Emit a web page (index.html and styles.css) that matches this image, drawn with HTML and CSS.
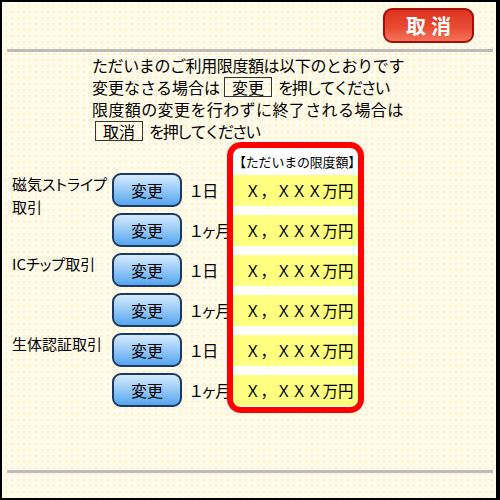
FILE: index.html
```html
<!DOCTYPE html>
<html lang="ja">
<head>
<meta charset="utf-8">
<title>限度額変更</title>
<link rel="stylesheet" href="styles.css">
</head>
<body>
<div class="frame">
  <header class="topbar">
    <button class="cancel">取消</button>
  </header>
  <div class="rule"></div>
  <div class="intro">
    <p class="tight">ただいまのご利用限度額は以下のとおりです</p>
    <p>変更なさる場合は<span class="key">変更</span><span class="kana">を押してください</span></p>
    <p class="loose">限度額の変更を行わずに終了される場合は</p>
    <p><span class="key key-first">取消</span><span class="kana">を押してください</span></p>
  </div>
  <div class="table">
    <div class="left">
      <div class="label">磁気ストライプ<br>取引</div>
      <button class="btn">変更</button><span class="period">１日</span>
      <button class="btn">変更</button><span class="period">１ヶ月</span>
      <div class="label">ICチップ取引</div>
      <button class="btn">変更</button><span class="period">１日</span>
      <button class="btn">変更</button><span class="period">１ヶ月</span>
      <div class="label">生体認証取引</div>
      <button class="btn">変更</button><span class="period">１日</span>
      <button class="btn">変更</button><span class="period">１ヶ月</span>
    </div>
    <div class="limits">
      <div class="limits-head">【ただいまの限度額】</div>
      <div class="amount">Ｘ，ＸＸＸ万円</div>
      <div class="amount">Ｘ，ＸＸＸ万円</div>
      <div class="amount">Ｘ，ＸＸＸ万円</div>
      <div class="amount">Ｘ，ＸＸＸ万円</div>
      <div class="amount">Ｘ，ＸＸＸ万円</div>
      <div class="amount">Ｘ，ＸＸＸ万円</div>
    </div>
  </div>
  <div class="rule rule-bottom"></div>
</div>
</body>
</html>
```

FILE: styles.css
```css
* { box-sizing: border-box; }
html, body { margin: 0; padding: 0; }
body {
  font-family: "Noto Sans CJK JP", "Noto Sans", sans-serif;
  color: #000;
}
.frame {
  width: 500px;
  height: 500px;
  border-style: solid;
  border-color: #000;
  border-width: 2px 4px 2px 2px;
  background-color: #fffcee;
  background-image: radial-gradient(circle, #fff2c4 1.1px, rgba(255,255,255,0) 1.8px);
  background-size: 6px 6px;
  background-position: 1px 1px;
  overflow: hidden;
}
.topbar {
  height: 47px;
  display: flex;
  justify-content: flex-end;
  align-items: flex-start;
  padding: 6px 22px 0 0;
}
.cancel {
  width: 91px;
  height: 35px;
  border: 2px solid #a50f0a;
  border-radius: 9px;
  background: linear-gradient(#dc3422, #e94a33 55%, #f3735a);
  color: #fff;
  font-family: "Noto Sans CJK JP", sans-serif;
  font-weight: bold;
  font-size: 20px;
  letter-spacing: 5px;
  padding: 0 0 0 5px;
  line-height: 1;
}
.rule {
  height: 3px;
  background: #bcbcbc;
  margin: 0 3px 0 5px;
}
.intro {
  margin: 2px 0 0 90px;
  font-size: 16px;
  line-height: 22px;
  font-kerning: none;
}
.intro p { margin: 0; white-space: nowrap; }
.tight { letter-spacing: -0.4px; }
.loose { letter-spacing: 0.4px; }
.kana { letter-spacing: -2.2px; }
.key {
  display: inline-block;
  border: 1px solid #333;
  line-height: 18px;
  padding: 0 7px;
  margin: 0 6px 0 4px;
  letter-spacing: 0;
}
.key-first { margin-left: 3px; }
.table {
  display: flex;
  align-items: flex-start;
}
.left {
  margin-top: 31px;
  padding-left: 10px;
  display: grid;
  grid-template-columns: 100px 70px 45px;
  grid-auto-rows: 34px;
  row-gap: 6px;
  column-gap: 0;
}
.label {
  grid-column: 1;
  grid-row: span 2;
  font-size: 15px;
  line-height: 23px;
  margin-top: -1px;
  font-feature-settings: "palt";
  white-space: nowrap;
}
.btn {
  grid-column: 2;
  width: 70px;
  height: 34px;
  border: 2px solid #1c3966;
  border-radius: 9px;
  background: linear-gradient(#d6ebff, #9dcdf8 45%, #54a4ee);
  font-family: "Noto Sans CJK JP", sans-serif;
  font-size: 16px;
  color: #000;
  padding: 0;
  line-height: 1;
}
.period {
  grid-column: 3;
  padding-left: 8px;
  font-size: 16px;
  white-space: nowrap;
  display: flex;
  align-items: center;
  font-feature-settings: "palt";
}
.limits {
  width: 137px;
  border: 6px solid #ff0000;
  border-radius: 14px;
  background: #fff;
  overflow: hidden;
  padding-bottom: 1px;
  display: flex;
  flex-direction: column;
  gap: 9px;
}
.limits-head {
  height: 27px;
  margin-bottom: -9px;
  font-size: 13px;
  line-height: 27px;
  white-space: nowrap;
  text-align: center;
  letter-spacing: -0.2px;
}
.amount {
  height: 31px;
  background: #ffff80;
  font-size: 15.5px;
  line-height: 31px;
  padding-left: 12px;
  white-space: nowrap;
}
.rule-bottom { margin-top: 57px; }
```
